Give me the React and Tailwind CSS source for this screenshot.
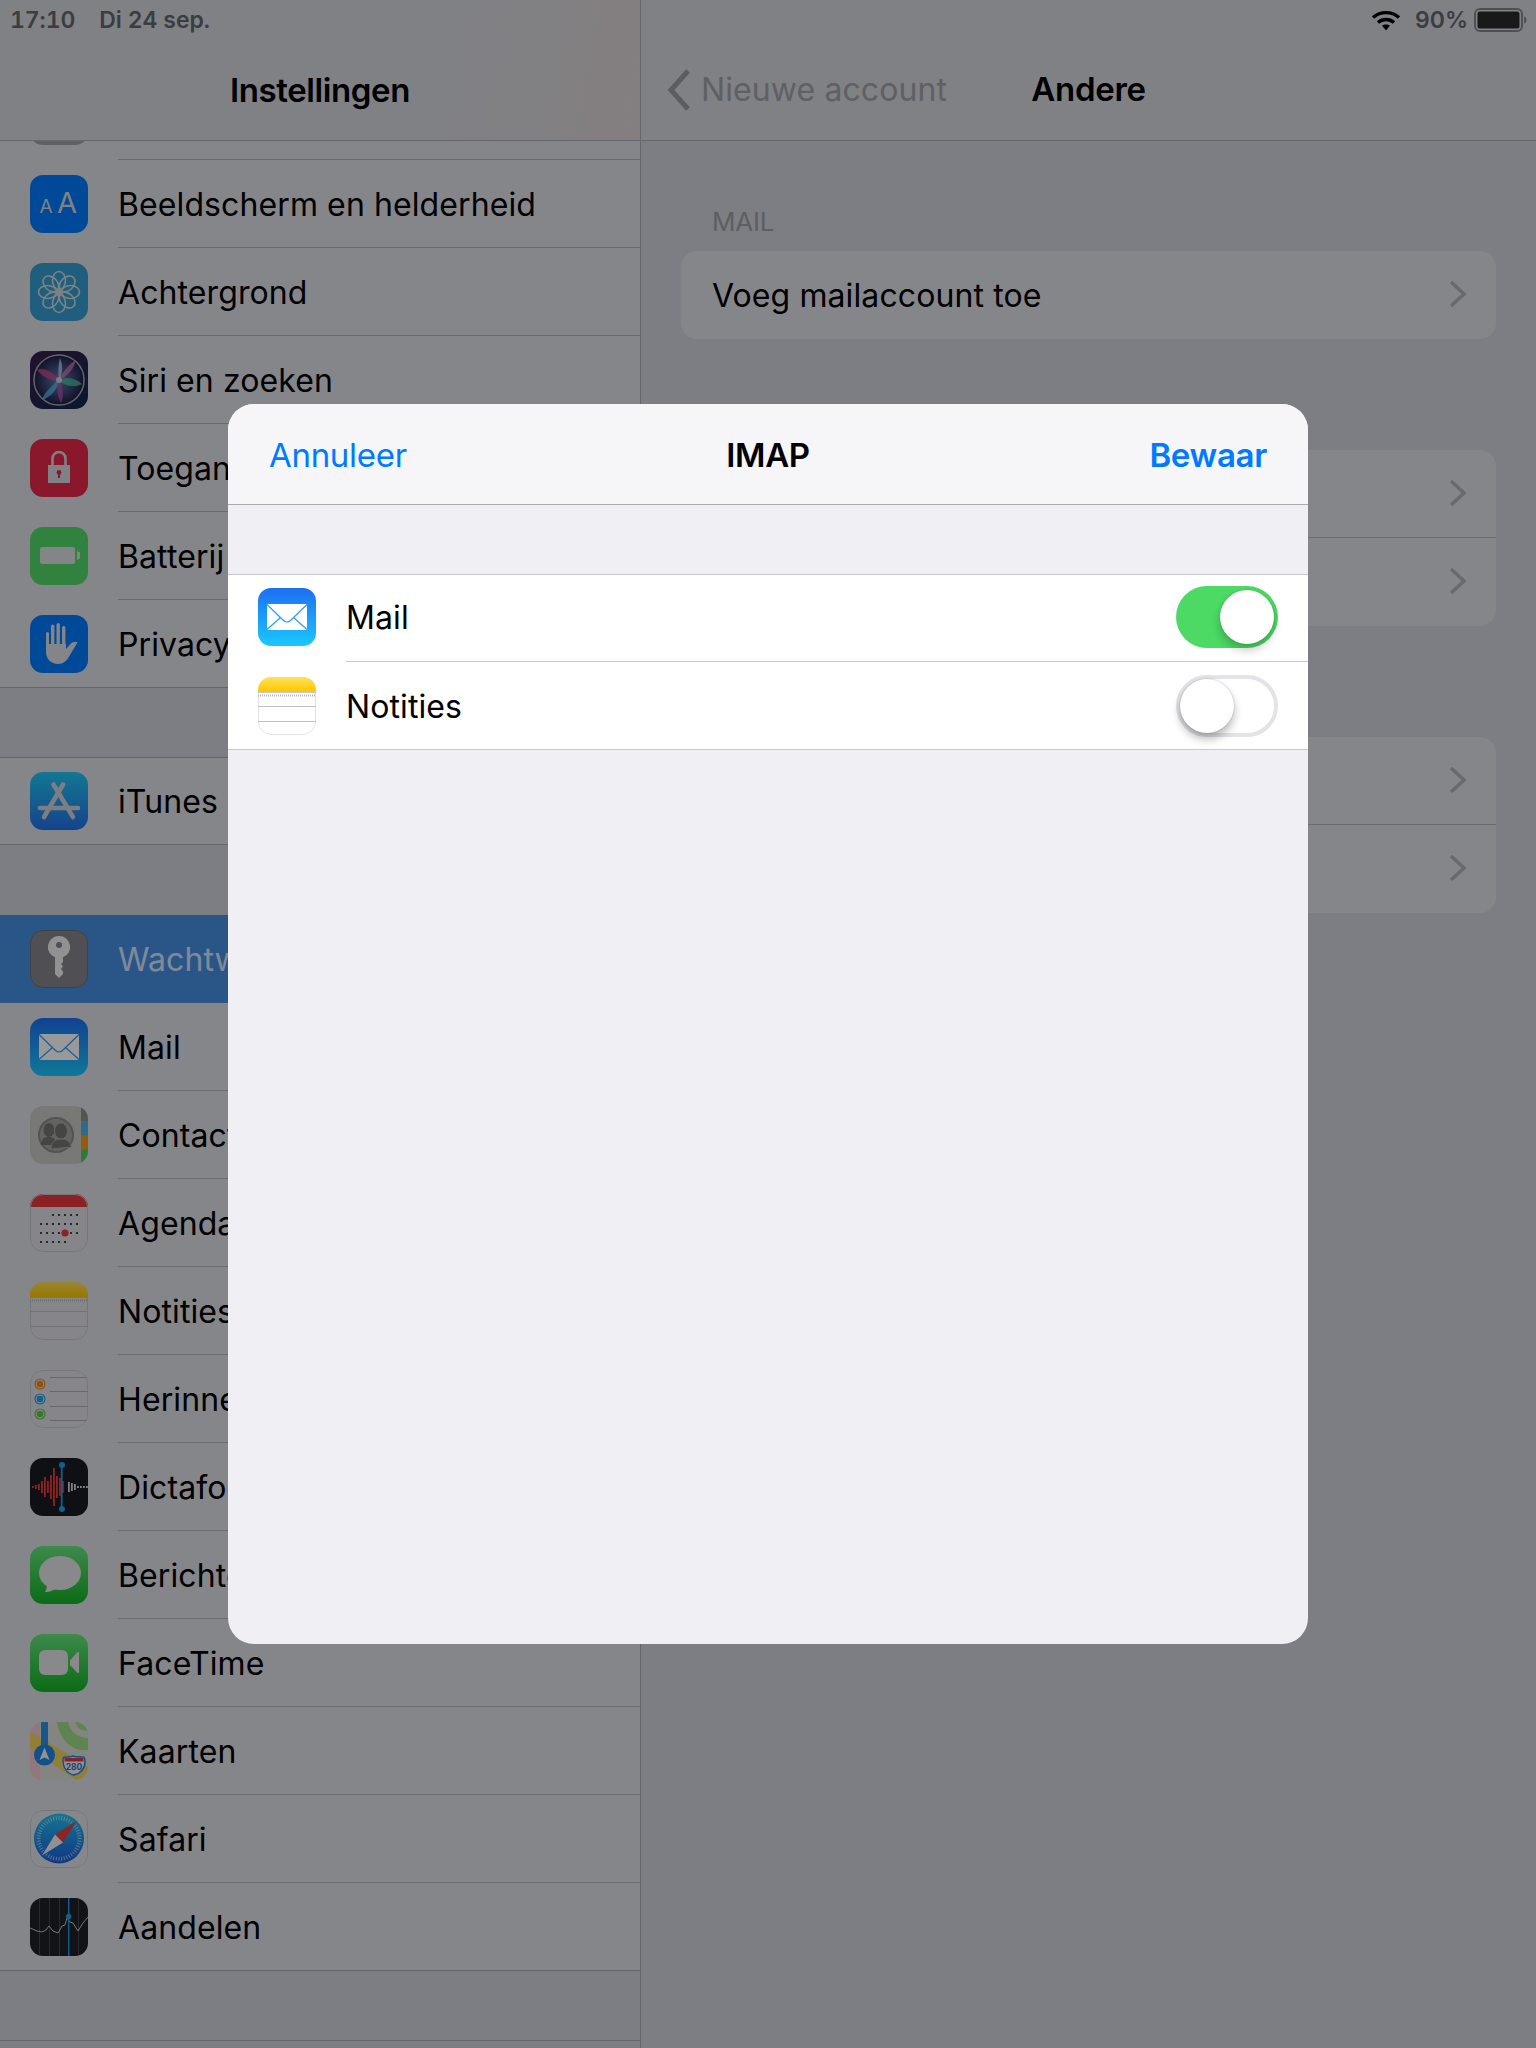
import React from 'react'

const font = "font-['Inter','Roboto',sans-serif]"

function Tile({ children, defs, fill }) {
  return (
    <svg width="58" height="58" viewBox="0 0 58 58" className="shrink-0 block">
      <defs>
        <clipPath id="tile">
          <rect width="58" height="58" rx="13" />
        </clipPath>
        {defs}
      </defs>
      <g clipPath="url(#tile)">
        <rect width="58" height="58" fill={fill} />
        {children}
      </g>
    </svg>
  )
}

const GeneralIcon = () => <Tile fill="#9fa0a6" />

const DisplayIcon = () => (
  <Tile fill="#007aff">
    <text x="9.500" y="38" fontSize="19" fontFamily="Inter" fill="#d6d8de">A</text>
    <text x="27" y="38" fontSize="29" fontFamily="Inter" fill="#d6d8de">A</text>
  </Tile>
)

const WallpaperIcon = () => (
  <Tile fill="#359fd0">
    {[0, 45, 90, 135, 180, 225, 270, 315].map((r) => (
      <ellipse key={r} cx="29" cy="17.500" rx="6.500" ry="9" fill="none" stroke="#cfd8dc" strokeWidth="1.600" transform={`rotate(${r} 29 29)`} />
    ))}
    <circle cx="29" cy="29" r="3" fill="#cfd8dc" />
  </Tile>
)

const SiriIcon = () => (
  <Tile
    fill="url(#siriBg)"
    defs={
      <>
        <linearGradient id="siriBg" x1="0" y1="0" x2="1" y2="1">
          <stop offset="0" stopColor="#3a1c52" />
          <stop offset="1" stopColor="#10294c" />
        </linearGradient>
        <radialGradient id="siriLens">
          <stop offset="0" stopColor="#5f7fae" />
          <stop offset="0.65" stopColor="#35406e" />
          <stop offset="1" stopColor="#1e1d3e" />
        </radialGradient>
      </>
    }
  >
    <circle cx="29" cy="29" r="25" fill="url(#siriLens)" stroke="#a3a6b2" strokeWidth="1.500" />
    <path d="M30 29C22 21 14 16 7 19C13 26 22 31 30 29Z" fill="#d54a92" opacity="0.75" />
    <path d="M28 29C33 21 40 12 46 9C44 18 37 26 28 29Z" fill="#e07ac0" opacity="0.7" />
    <path d="M28 29C37 26 46 27 52 33C44 37 35 35 28 29Z" fill="#4dc79c" opacity="0.75" />
    <path d="M30 28C22 34 14 42 12 49C21 46 28 38 30 28Z" fill="#55b8ea" opacity="0.8" />
    <path d="M29 28C33 36 34 44 31 52C27 44 26 36 29 28Z" fill="#b552b5" opacity="0.75" />
    <path d="M29 29C28 21 28 14 30 7C33 14 33 22 29 29Z" fill="#c9d6ea" opacity="0.75" />
    <circle cx="29" cy="29" r="3" fill="#dbe4f2" opacity="0.8" />
  </Tile>
)

const LockIcon = () => (
  <Tile fill="#e5294c">
    <path d="M22.500 27V19.500a6.500 6.500 0 0 1 13 0V27" fill="none" stroke="#d6d8de" strokeWidth="2.600" />
    <rect x="18" y="26" width="22" height="18" fill="#d6d8de" />
    <circle cx="29" cy="33.500" r="2.400" fill="#e5294c" />
    <rect x="28" y="34" width="2" height="5" fill="#e5294c" />
  </Tile>
)

const BatteryIcon = () => (
  <Tile fill="#53d769">
    <rect x="10" y="20" width="35" height="17" rx="2" fill="#dcdee2" />
    <path d="M47 24l3 1.500v6L47 33Z" fill="#dcdee2" />
  </Tile>
)

const HandIcon = () => (
  <Tile fill="#007aff">
    <g fill="#dcdee4">
      <rect x="16" y="17" width="3" height="18" rx="1.500" />
      <rect x="21" y="9.500" width="3.400" height="24" rx="1.700" />
      <rect x="26.500" y="8" width="3.400" height="25" rx="1.700" />
      <rect x="32" y="11" width="3.400" height="24" rx="1.700" />
      <path d="M16 29H36V34L40.500 29C43 26.500 46 26 47.500 27.500L40 40C37 46 33 49 28 49C21 49 16 44 16 37Z" />
    </g>
  </Tile>
)

const AppStoreIcon = () => (
  <Tile
    fill="url(#storeBg)"
    defs={
      <linearGradient id="storeBg" x1="0" y1="0" x2="0" y2="1">
        <stop offset="0" stopColor="#20c7f5" />
        <stop offset="1" stopColor="#2470e8" />
      </linearGradient>
    }
  >
    <g stroke="#d0d3d8" strokeWidth="4.600" strokeLinecap="round">
      <path d="M33 12.500L14 45" />
      <path d="M23.500 12.500L43 45" />
      <path d="M10 36H48" />
    </g>
  </Tile>
)

const KeyIcon = () => (
  <Tile fill="#85868c">
    <rect x="0.500" y="0.500" width="57" height="57" rx="12.500" fill="none" stroke="#6c6d75" />
    <path d="M29 6a11 11 0 0 1 4 21.300V32l-2 2 2 2.500-2 2.500 2 2.500V44l-4 4-4-4V27.300A11 11 0 0 1 29 6Z" fill="#f2f2f4" />
    <circle cx="29" cy="15" r="3" fill="#85868c" />
  </Tile>
)

const MailIcon = () => (
  <Tile
    fill="url(#mailBg)"
    defs={
      <linearGradient id="mailBg" x1="0" y1="0" x2="0" y2="1">
        <stop offset="0" stopColor="#1d6ff2" />
        <stop offset="1" stopColor="#1ac8fe" />
      </linearGradient>
    }
  >
    <rect x="9" y="16" width="40" height="26" rx="1" fill="#fff" />
    <g fill="none" stroke="#2f9cf5" strokeWidth="1.200">
      <path d="M9 16.500L25.500 32.500C27.500 34.500 30.500 34.500 32.500 32.500L49 16.500" />
      <path d="M9 41.500L22.500 29.500M49 41.500L35.500 29.500" />
    </g>
  </Tile>
)

const ContactsIcon = () => (
  <Tile fill="#c9c9c6">
    <rect x="51" y="0" width="7" height="15" fill="#8d8d8a" />
    <rect x="51" y="15" width="7" height="14" fill="#4fb0e8" />
    <rect x="51" y="29" width="7" height="15" fill="#f09a1a" />
    <rect x="51" y="44" width="7" height="14" fill="#4fcb62" />
    <circle cx="26" cy="29" r="17" fill="#a6a6a4" stroke="#8a8a88" strokeWidth="2" />
    <ellipse cx="19" cy="24" rx="5.500" ry="7" fill="#747472" />
    <path d="M11 39c0-6 3-8 8-8s7 2 7 8Z" fill="#747472" />
    <ellipse cx="31" cy="25" rx="6.500" ry="8" fill="#747472" stroke="#a6a6a4" />
    <path d="M21 43c0-7 4-10 10-10s10 3 10 8Z" fill="#747472" stroke="#a6a6a4" />
  </Tile>
)

const CalendarIcon = () => {
  const rows = [
    { y: 21, x: [23, 29, 35, 41, 47] },
    { y: 30, x: [11, 17, 23, 29, 35, 41, 47] },
    { y: 39, x: [11, 17, 23, 29, 41, 47] },
    { y: 48, x: [11, 17, 23, 29, 35] },
  ]
  return (
    <Tile fill="#dfe0e6">
      <rect y="0" width="58" height="13" fill="#e8383a" />
      {rows.map((r) => r.x.map((x) => <circle key={`${r.y}-${x}`} cx={x} cy={r.y} r="1" fill="#111" />))}
      <circle cx="35" cy="39" r="3.600" fill="#e8383a" />
      <rect x="0.500" y="0.500" width="57" height="57" rx="12.500" fill="none" stroke="#c4c5cc" />
    </Tile>
  )
}

const NotesIcon = ({ paper = '#ffffff', edge = '#e2e2e6' }) => (
  <Tile
    fill={paper}
    defs={
      <linearGradient id="notesTop" x1="0" y1="0" x2="0" y2="1">
        <stop offset="0" stopColor="#ffe15a" />
        <stop offset="1" stopColor="#fec800" />
      </linearGradient>
    }
  >
    <rect x="0.500" y="0.500" width="57" height="57" rx="12.500" fill="none" stroke={edge} />
    <rect width="58" height="15" fill="url(#notesTop)" />
    <rect y="15" width="58" height="1" fill="#c8c8c8" />
    <path d="M0 18.500H58" stroke="#b5b5b5" strokeWidth="2" strokeDasharray="1 1" />
    <path d="M0 29.500H58M0 44.500H58" stroke="#c0c0c4" strokeWidth="1" />
  </Tile>
)

const RemindersIcon = () => (
  <Tile fill="#dfe0e6">
    <rect x="0.500" y="0.500" width="57" height="57" rx="12.500" fill="none" stroke="#c8c9cf" />
    <path d="M20 7.500H58M20 21.500H58M20 36.500H58M20 50.500H58" stroke="#aeb0b6" strokeWidth="1" />
    {[
      { y: 14, c: '#f28a15' },
      { y: 29, c: '#2b9fe8' },
      { y: 44, c: '#62c944' },
    ].map((d) => (
      <g key={d.y}>
        <circle cx="10" cy={d.y} r="5" fill="none" stroke={d.c} strokeWidth="1.200" />
        <circle cx="10" cy={d.y} r="3.300" fill={d.c} />
      </g>
    ))}
  </Tile>
)

const VoiceIcon = () => {
  const red = [[2, 1], [5, 2], [8, 3], [11, 6], [14, 10], [17, 6], [20, 12], [23, 19], [26, 11], [29, 9], [32, 6]]
  const gray = [[38, 5], [41, 4], [44, 3], [47, 1], [50, 1], [53, 1], [56, 1]]
  return (
    <Tile fill="#1a1b20">
      {red.map(([x, h]) => <rect key={x} x={x} y={29 - h} width="1.800" height={h * 2} fill="#f0383a" />)}
      {gray.map(([x, h]) => <rect key={x} x={x} y={29 - h} width="1.800" height={h * 2} fill="#d8d8d8" />)}
      <rect x="30.800" y="7" width="1.800" height="44" fill="#1e9df0" />
      <circle cx="32" cy="7" r="3" fill="#1e9df0" />
      <circle cx="32" cy="51" r="3" fill="#1e9df0" />
    </Tile>
  )
}

const MessagesIcon = () => (
  <Tile
    fill="url(#msgBg)"
    defs={
      <linearGradient id="msgBg" x1="0" y1="0" x2="0" y2="1">
        <stop offset="0" stopColor="#67e67f" />
        <stop offset="1" stopColor="#14b326" />
      </linearGradient>
    }
  >
    <ellipse cx="30" cy="27" rx="21" ry="17" fill="#e4e5e8" />
    <path d="M17 39C17 43 15 46 15 46C20 46 24 44 27 42Z" fill="#e4e5e8" />
  </Tile>
)

const FaceTimeIcon = () => (
  <Tile
    fill="url(#ftBg)"
    defs={
      <linearGradient id="ftBg" x1="0" y1="0" x2="0" y2="1">
        <stop offset="0" stopColor="#67e67f" />
        <stop offset="1" stopColor="#14b326" />
      </linearGradient>
    }
  >
    <rect x="9" y="16" width="29" height="25" rx="6" fill="#e4e5e8" />
    <path d="M40 26.500L47 18.500C48 17.500 49 18 49 19.500V37.500C49 39 48 39.500 47 38.500L40 31Z" fill="#e4e5e8" />
  </Tile>
)

const MapsIcon = () => (
  <Tile fill="#dcdcd8">
    <path d="M0 0H10V58H0Z" fill="#f0c8d0" />
    <path d="M0 10L58 44V58H46L0 26Z" fill="#f2d260" />
    <path d="M27 0H58V28C42 30 30 18 27 0Z" fill="#9fdc88" />
    <path d="M38 0H58V16C48 16 40 10 38 0Z" fill="#dcdcd8" />
    <path d="M45 0H58V9C52 9 47 6 45 0Z" fill="#9fdc88" />
    <path d="M11 0H18V26H11Z" fill="#2a90e8" />
    <circle cx="14.500" cy="33" r="10.500" fill="#1f86e6" />
    <path d="M14.500 25.500L19.500 38L14.500 35.500L9.500 38Z" fill="#f2f3f5" />
    <path d="M33 37C33 35 34 35 37 35C41 35 42 34.500 43 34C45 35 47 35 53 35C55 35 55 37 55 40C55 47 50 52 44 53C38 52 33 47 33 37Z" fill="#f3f3f3" stroke="#1f86e6" strokeWidth="1.500" />
    <rect x="34.500" y="36" width="19" height="3.500" fill="#e23b3b" />
    <text x="44" y="48" fontSize="8.500" fontWeight="700" textAnchor="middle" fontFamily="Inter" fill="#1f6fd6">280</text>
  </Tile>
)

const SafariIcon = () => {
  const ticks = []
  for (let i = 0; i < 48; i++) ticks.push(i * 7.5)
  return (
    <Tile
      fill="#e0e1e6"
      defs={
        <linearGradient id="safBg" x1="0" y1="0" x2="0" y2="1">
          <stop offset="0" stopColor="#25c4f0" />
          <stop offset="1" stopColor="#1a5be0" />
        </linearGradient>
      }
    >
      <rect x="0.500" y="0.500" width="57" height="57" rx="12.500" fill="none" stroke="#c6c7ce" />
      <circle cx="29" cy="28.500" r="25" fill="url(#safBg)" />
      {ticks.map((r) => (
        <path key={r} d="M29 6V10" stroke="#d7e4f0" strokeWidth="0.700" transform={`rotate(${r} 29 28.500)`} />
      ))}
      <path d="M46 11.500L33 32.500L25 24.500Z" fill="#f03a35" />
      <path d="M12 45.500L25 24.500L33 32.500Z" fill="#f2f2f2" />
    </Tile>
  )
}

const StocksIcon = () => (
  <Tile fill="#1f2025">
    <path d="M9.500 0V58M19.500 0V58M29.500 0V58M48.500 0V58" stroke="#45464c" strokeWidth="1" />
    <polyline points="0,30 7,33 12,34 16,32 19,28 23,33 28,35 32,28 35,27 37,20 40,24 43,25 48,33 53,25 58,19" fill="none" stroke="#c4c5c9" strokeWidth="1" />
    <rect x="38" y="0" width="1.400" height="58" fill="#1e9df0" />
    <circle cx="38.700" cy="18.500" r="2.700" fill="#1e9df0" />
  </Tile>
)

function Row({ icon, label, selected, last, first }) {
  const h = first ? 'h-[87px]' : 'h-[88px]'
  const bg = selected ? 'bg-[#468ee1]' : 'bg-[#dedfe6]'
  const outer = last ? 'border-b border-[#a9abb2]' : ''
  const inner = last || selected ? '' : 'border-b border-[#b2b4bb]'
  return (
    <div className={`flex items-center pl-[30px] ${h} ${bg} ${outer}`}>
      {icon}
      <div className={`ml-[30px] flex h-full flex-1 items-center pt-[2px] text-[32px] tracking-[0.1px] ${inner} ${selected ? 'text-[#d4e6ff]' : 'text-black'}`}>
        {label}
      </div>
    </div>
  )
}

function Sidebar() {
  return (
    <div className="isolate flex h-full w-[640px] shrink-0 flex-col overflow-hidden">
      <div className="relative z-10 h-[141px] shrink-0 border-b border-[#aaacb2] bg-[linear-gradient(100deg,#d5d7de_70%,#dcd3d4_100%)]">
        <div className="flex h-[40px] items-center gap-[24px] pl-[10px] text-[23px] font-semibold tracking-[-0.1px] text-[#64666b] tabular-nums">
          <span>17:10</span>
          <span>Di 24 sep.</span>
        </div>
        <div className="mt-[30px] text-center text-[33px] leading-[40px] font-semibold tracking-[-0.4px] text-black">Instellingen</div>
      </div>
      <div className="-mt-[69px]">
        <Row icon={<GeneralIcon />} label="Algemeen" />
        <Row icon={<DisplayIcon />} label="Beeldscherm en helderheid" />
        <Row icon={<WallpaperIcon />} label="Achtergrond" />
        <Row icon={<SiriIcon />} label="Siri en zoeken" />
        <Row icon={<LockIcon />} label="Toegangscode" />
        <Row icon={<BatteryIcon />} label="Batterij" />
        <Row icon={<HandIcon />} label="Privacy" last />
        <div className="h-[70px] border-b border-[#a9abb2]" />
        <Row icon={<AppStoreIcon />} label="iTunes en App Store" last first />
        <div className="h-[70px]" />
        <Row icon={<KeyIcon />} label="Wachtwoorden en accounts" selected />
        <Row icon={<MailIcon />} label="Mail" />
        <Row icon={<ContactsIcon />} label="Contacten" />
        <Row icon={<CalendarIcon />} label="Agenda" />
        <Row icon={<NotesIcon paper="#dfe0e6" edge="#c4c5cc" />} label="Notities" />
        <Row icon={<RemindersIcon />} label="Herinneringen" />
        <Row icon={<VoiceIcon />} label="Dictafoon" />
        <Row icon={<MessagesIcon />} label="Berichten" />
        <Row icon={<FaceTimeIcon />} label="FaceTime" />
        <Row icon={<MapsIcon />} label="Kaarten" />
        <Row icon={<SafariIcon />} label="Safari" />
        <Row icon={<StocksIcon />} label="Aandelen" last />
        <div className="h-[70px] border-b border-[#a9abb2]" />
      </div>
    </div>
  )
}

function Chevron() {
  return (
    <svg width="18" height="28" viewBox="0 0 18 28" className="-mt-[2px] block">
      <path d="M2 2L15 14L2 26" fill="none" stroke="#afb1b9" strokeWidth="3.600" />
    </svg>
  )
}

function CardRow({ label, divider }) {
  return (
    <div className={`flex items-center justify-between pr-[29px] pl-[31px] text-[32px] tracking-[0.1px] text-black ${divider ? 'h-[88px] border-b border-[#b2b4bb]' : 'h-[88px]'}`}>
      <span className="pt-[2px]">{label}</span>
      <Chevron />
    </div>
  )
}

function DetailPane() {
  return (
    <div className="flex h-full flex-1 flex-col border-l border-[#aaacb2]">
      <div className="relative h-[141px] shrink-0 border-b border-[#aaacb2] bg-[#d5d7de]">
        <div className="flex h-[40px] items-center justify-end pr-[9px]">
          <svg width="30" height="21" viewBox="0 0 30 21" className="mr-[14px]">
            <g fill="none" stroke="#000" strokeWidth="3.400">
              <path d="M2 7.500C9.500 1 20.500 1 28 7.500" />
              <path d="M7 12.500C11.500 8.500 18.500 8.500 23 12.500" />
            </g>
            <path d="M11 15.500C13 14 17 14 19 15.500L15 20.500Z" fill="#000" />
          </svg>
          <span className="mr-[6px] text-[23px] font-semibold text-[#64666b]">90%</span>
          <svg width="53" height="24" viewBox="0 0 53 24">
            <rect x="1" y="1" width="47" height="22" rx="5" fill="none" stroke="#84868c" strokeWidth="2" />
            <rect x="3.500" y="3.500" width="42" height="17" rx="2.500" fill="#2a2a2c" />
            <path d="M50 8.500C52 9 52.500 10.500 52.500 12S52 15 50 15.500Z" fill="#84868c" />
          </svg>
        </div>
        <div className="relative mt-[30px] flex h-[40px] items-center justify-center">
          <div className="absolute top-0 left-[25px] flex h-full items-center">
            <svg width="26" height="44" viewBox="0 0 26 44" className="mr-[9px]">
              <path d="M22 3L5 22L22 41" fill="none" stroke="#999ba2" strokeWidth="5" />
            </svg>
            <span className="text-[32px] tracking-[0.1px] text-[#9fa0a7]">Nieuwe account</span>
          </div>
          <span className="text-[33px] font-semibold tracking-[-0.3px] text-black">Andere</span>
        </div>
      </div>
      <div className="px-[40px] pt-[65px]">
        <div className="pl-[31px] text-[26px] leading-[32px] tracking-[-0.2px] text-[#9b9da3]">MAIL</div>
        <div className="mt-[13px] overflow-hidden rounded-[16px] bg-[#dedfe6]">
          <CardRow label="Voeg mailaccount toe" />
        </div>
        <div className="mt-[111px] overflow-hidden rounded-[16px] bg-[#dedfe6]">
          <CardRow divider />
          <CardRow />
        </div>
        <div className="mt-[111px] overflow-hidden rounded-[16px] bg-[#dedfe6]">
          <CardRow divider />
          <CardRow />
        </div>
      </div>
    </div>
  )
}

function Toggle({ on }) {
  return on ? (
    <div className="flex h-[62px] w-[102px] items-center justify-end rounded-full bg-[#4cd964] pr-[4px]">
      <div className="h-[54px] w-[54px] rounded-full bg-white shadow-[0_6px_10px_rgba(0,0,0,0.22),0_0_2px_rgba(0,0,0,0.2)]" />
    </div>
  ) : (
    <div className="flex h-[62px] w-[102px] items-center justify-start rounded-full border-[4px] border-[#e3e3e8] bg-white">
      <div className="h-[54px] w-[54px] rounded-full bg-white shadow-[0_6px_10px_rgba(0,0,0,0.28),0_0_2px_rgba(0,0,0,0.25)]" />
    </div>
  )
}

function ModalRow({ icon, label, on, first }) {
  return (
    <div className={`flex items-center pr-[30px] pl-[30px] ${first ? 'h-[86px] pb-[2px]' : 'h-[87px]'}`}>
      {icon}
      <div className="ml-[30px] flex h-full flex-1 items-center justify-between text-[32px] tracking-[0.1px] text-black">
        <span className="pt-[2px]">{label}</span>
        <Toggle on={on} />
      </div>
    </div>
  )
}

function Modal() {
  return (
    <div className="absolute top-[404px] left-[228px] flex h-[1240px] w-[1080px] flex-col overflow-hidden rounded-[26px] bg-[#efeff4]">
      <div className="grid h-[101px] shrink-0 grid-cols-[1fr_auto_1fr] items-center border-b border-[#a9a9ae] bg-[#f6f6f8] px-[41px] pt-[3px] text-[33px] tracking-[-0.3px]">
        <span className="text-[#007aff]">Annuleer</span>
        <span className="font-semibold text-black">IMAP</span>
        <span className="text-right font-semibold text-[#007aff]">Bewaar</span>
      </div>
      <div className="h-[69px] shrink-0" />
      <div className="border-y border-[#c8c7cc] bg-white">
        <ModalRow icon={<MailIcon />} label="Mail" on first />
        <div className="ml-[118px] h-px bg-[#c8c7cc]" />
        <ModalRow icon={<NotesIcon />} label="Notities" />
      </div>
    </div>
  )
}

export default function App() {
  return (
    <div className={`relative flex h-[2048px] w-[1536px] overflow-hidden bg-[#d0d2da] ${font}`}>
      <Sidebar />
      <DetailPane />
      <div className="absolute inset-0 bg-black/40" />
      <Modal />
    </div>
  )
}
